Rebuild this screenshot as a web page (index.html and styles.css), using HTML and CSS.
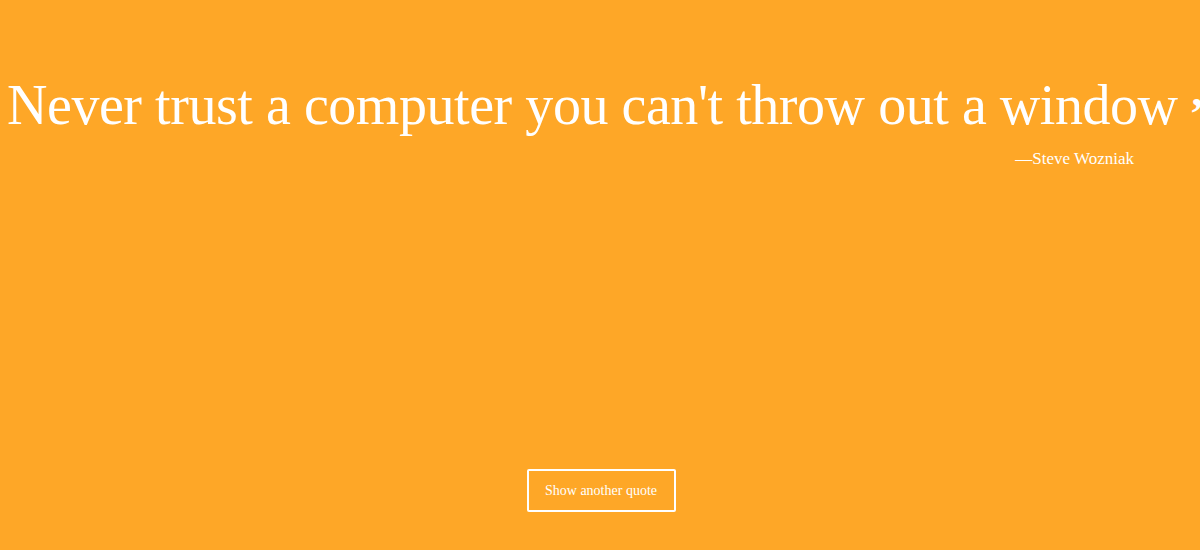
FILE: index.html
```html
<!DOCTYPE html>
<html>
<head>
<meta charset="utf-8">
<link rel="stylesheet" href="styles.css">
</head>
<body>
<main class="page">
  <section class="quote-box">
    <p class="quote-text">Never trust a computer you can't throw out a window<span class="quote-mark">”</span></p>
    <p class="quote-author">—Steve Wozniak</p>
  </section>
  <div class="actions">
    <button class="new-quote">Show another quote</button>
  </div>
</main>
</body>
</html>
```
FILE: styles.css
```css
html, body {
  margin: 0;
  padding: 0;
}
body {
  background: #fea727;
  color: #ffffff;
  font-family: "Liberation Serif", "DejaVu Serif", serif;
  overflow: hidden;
}
.page {
  height: 550px;
  display: flex;
  flex-direction: column;
  justify-content: space-between;
}
.quote-box {
  padding-top: 72px;
}
.quote-text {
  margin: 0;
  padding-left: 7px;
  font-size: 56px;
  line-height: 66px;
  letter-spacing: -0.45px;
  white-space: nowrap;
}
.quote-mark {
  margin-left: 13px;
  font-size: 44px;
  font-weight: bold;
  vertical-align: -4px;
}
.quote-author {
  margin: 2px 0 0;
  padding-right: 66px;
  text-align: right;
  font-size: 17px;
}
.actions {
  display: flex;
  justify-content: center;
  padding-bottom: 38px;
}
.new-quote {
  width: 149px;
  height: 43px;
  margin-left: 2px;
  background: transparent;
  border: 2px solid #ffffff;
  border-radius: 2px;
  color: #ffffff;
  font-family: "Liberation Serif", "DejaVu Serif", serif;
  font-size: 14px;
  cursor: pointer;
}
```
